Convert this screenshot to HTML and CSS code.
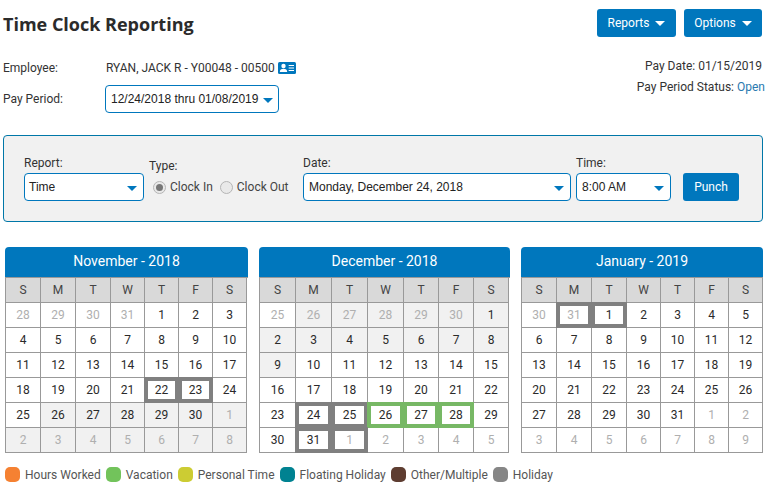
FILE: index.html
```html
<!DOCTYPE html>
<html lang="en">
<head>
<meta charset="utf-8">
<title>Time Clock Reporting</title>
<link rel="stylesheet" href="styles.css">
</head>
<body>
<div class="page">
  <header class="top">
    <h1 class="title">Time Clock Reporting</h1>
    <div class="actions">
      <button class="btn btn-reports">Reports<span class="caret"></span></button>
      <button class="btn btn-options">Options<span class="caret"></span></button>
    </div>
  </header>
  <section class="info">
    <div class="info-left">
      <div class="info-row emp-row">
        <span class="info-label">Employee:</span>
        <span class="emp-name">RYAN, JACK R - Y00048 - 00500</span>
        <svg class="id-icon" width="18" height="12" viewBox="0 0 18 12"><rect width="18" height="12" rx="1.500" fill="#0077bd"/><circle cx="5.500" cy="4" r="2.200" fill="#fff"/><path d="M1.800 10c0-2.300 1.500-3.300 3.700-3.300s3.700 1 3.700 3.300z" fill="#fff"/><path d="M10.700 3.500h5.300M10.700 6h5.300M10.700 8.500h5.300" stroke="#fff" stroke-width="1"/></svg>
      </div>
      <div class="info-row period-row">
        <span class="info-label">Pay Period:</span>
        <div class="select select-period">12/24/2018 thru 01/08/2019<span class="caret caret-blue"></span></div>
      </div>
    </div>
    <div class="info-right">
      <div class="paydate">Pay Date: 01/15/2019</div>
      <div class="status">Pay Period Status: <span class="open">Open</span></div>
    </div>
  </section>
  <section class="panel">
    <div class="field f-report">
      <label>Report:</label>
      <div class="select">Time<span class="caret caret-blue"></span></div>
    </div>
    <div class="field f-type">
      <label>Type:</label>
      <div class="radios">
        <span class="radio on"></span><span class="radio-text">Clock In</span>
        <span class="radio"></span><span class="radio-text">Clock Out</span>
      </div>
    </div>
    <div class="field f-date">
      <label>Date:</label>
      <div class="select">Monday, December 24, 2018<span class="caret caret-blue"></span></div>
    </div>
    <div class="field f-time">
      <label>Time:</label>
      <div class="select">8:00 AM<span class="caret caret-blue"></span></div>
    </div>
    <button class="btn btn-punch">Punch</button>
  </section>
  <section class="calendars" id="calendars"></section>
  <footer class="legend">
    <span class="key"><i class="sw sw-orange"></i>Hours Worked</span>
    <span class="key"><i class="sw sw-green"></i>Vacation</span>
    <span class="key"><i class="sw sw-yellow"></i>Personal Time</span>
    <span class="key"><i class="sw sw-teal"></i>Floating Holiday</span>
    <span class="key"><i class="sw sw-brown"></i>Other/Multiple</span>
    <span class="key"><i class="sw sw-gray"></i>Holiday</span>
  </footer>
</div>
<script src="app.js"></script>
</body>
</html>
```
FILE: styles.css
```css
* { box-sizing: border-box; }
html, body { margin: 0; padding: 0; background: #fff; }
body { font-family: Roboto, sans-serif; font-size: 12px; color: #333; width: 774px; height: 487px; overflow: hidden; }
.page { padding: 0 11px 0 3px; }
.top { display: flex; justify-content: space-between; align-items: flex-start; padding-top: 9px; }
.title { margin: 5px 0 0; font-family: "Open Sans", sans-serif; font-weight: 700; font-size: 18px; line-height: 20px; color: #2b2b2b; }
.actions { display: flex; gap: 8px; margin-right: 1px; }
.btn { border: 0; background: #0077bd; color: #fff; font-family: Roboto, sans-serif; font-size: 12px; font-weight: 400; border-radius: 3px; height: 28px; padding: 0; display: flex; align-items: center; justify-content: center; }
.btn-reports { width: 79px; }
.btn-options { width: 78px; }
.caret { display: inline-block; width: 0; height: 0; border-left: 5px solid transparent; border-right: 5px solid transparent; border-top: 5px solid #fff; margin-left: 6px; }
.caret-blue { border-top-color: #0077bd; position: absolute; right: 6px; top: 12px; margin: 0; }
.select-period .caret-blue { right: 5px; }
.info { display: flex; justify-content: space-between; height: 98px; }
.info-row { display: flex; align-items: center; }
.info-label { width: 102px; }
.emp-row { margin-top: 23px; height: 16px; }
.emp-name { margin-left: 1px; }
.id-icon { margin-left: 3px; }
.period-row { margin-top: 9px; }
.select { position: relative; height: 28px; background: #fff; border: 1px solid #0077bd; border-radius: 4px; padding: 0 5px; display: flex; align-items: center; color: #222; font-family: "Liberation Sans", Arial, sans-serif; font-size: 12px; }
.select-period { width: 174px; }
.info-right { text-align: right; padding-top: 21px; margin-right: -2px; line-height: 16px; }
.paydate { padding-right: 3px; }
.status { margin-top: 5px; }
.open { color: #2a7ab0; }
.panel { display: flex; align-items: flex-end; height: 87px; background: #f1f1f1; border: 1px solid #0077a8; border-radius: 4px; padding: 0 0 20px 20px; }
.field label { display: block; line-height: 14px; margin-bottom: 3px; color: #333; }
.f-report { width: 125px; }
.f-report .select { width: 120px; padding: 0 4px; }
.f-type { width: 154px; }
.f-type label { margin-bottom: 0; }
.radios { display: flex; align-items: center; height: 28px; padding-left: 4px; color: #444; }
.radio { width: 13px; height: 13px; border-radius: 50%; border: 1px solid #b5b5b5; background: #e9e9e9; margin-right: 4px; position: relative; flex: none; }
.radio.on::after { content: ""; position: absolute; left: 2px; top: 2px; width: 7px; height: 7px; border-radius: 50%; background: #777; }
.radio-text { margin-right: 7px; }
.f-date { width: 273px; }
.f-date .select { width: 268px; }
.f-time { width: 107px; }
.f-time .select { width: 95px; }
.btn-punch { width: 56px; }
.calendars { display: flex; margin: 25px 0 0 2px; gap: 11px; }
.cal-1 { width: 243px; }
.cal-2 { width: 251px; }
.cal-3 { width: 242px; }
.cal-head { background: #0077bd; color: #fff; text-align: center; height: 30px; line-height: 28px; font-size: 14px; font-weight: 400; border-radius: 4px 4px 0 0; }
.grid { display: grid; border-left: 1px solid #999; border-top: 1px solid #999; }
.cal-1 .grid, .cal-3 .grid { grid-template-columns: repeat(3, 35px) repeat(4, 34px); }
.cal-2 .grid { grid-template-columns: repeat(4, 36px) repeat(3, 35px); }
.c { height: 25px; border-right: 1px solid #999; border-bottom: 1px solid #999; display: flex; align-items: center; justify-content: center; background: #fff; color: #2a2a2a; font-size: 12px; position: relative; }
.c.dow { background: #d9d9d9; color: #444; }
.c.shade { background: #f1f1f1; }
.c.dim { color: #afafaf; }
.c.box-gray::after, .c.box-green::after { content: ""; position: absolute; top: -1px; right: -1px; bottom: -1px; left: -1px; border: 4px solid #808080; }
.c.box-green::after { border-color: #77b865; }
.legend { display: flex; align-items: center; margin: 14px 0 0 2px; color: #555; gap: 5px; }
.key { display: flex; align-items: center; }
.sw { width: 15px; height: 15px; border-radius: 5px; margin-right: 5px; display: block; }
.sw-orange { background: #f58132; }
.sw-green { background: #72c35b; }
.sw-yellow { background: #cccc33; }
.sw-teal { background: #008291; }
.sw-brown { background: #5e3d31; }
.sw-gray { background: #868686; }
```
FILE: app.js
```js
var DAYS = ["S", "M", "T", "W", "T", "F", "S"];
var months = [
  { title: "November - 2018", cls: "cal-1", prevStart: 28, first: 4, len: 30, shade: [29, 41], gray: [25, 26], green: [] },
  { title: "December - 2018", cls: "cal-2", prevStart: 25, first: 6, len: 31, shade: [1, 14], gray: [29, 30, 36, 37], green: [31, 32, 33] },
  { title: "January - 2019", cls: "cal-3", prevStart: 30, first: 2, len: 31, shade: null, gray: [1, 2], green: [] }
];
var host = document.getElementById("calendars");
months.forEach(function (m) {
  var h = '<div class="' + m.cls + '"><div class="cal-head">' + m.title + '</div><div class="grid">';
  DAYS.forEach(function (d) { h += '<div class="c dow">' + d + '</div>'; });
  for (var i = 0; i < 42; i++) {
    var n, cl = ["c"];
    if (i < m.first) { n = m.prevStart + i; cl.push("dim"); }
    else if (i - m.first < m.len) { n = i - m.first + 1; }
    else { n = i - m.first - m.len + 1; cl.push("dim"); }
    if (m.shade && i >= m.shade[0] && i <= m.shade[1]) cl.push("shade");
    if (m.gray.indexOf(i) >= 0) cl.push("box-gray");
    if (m.green.indexOf(i) >= 0) cl.push("box-green");
    h += '<div class="' + cl.join(" ") + '">' + n + '</div>';
  }
  h += '</div></div>';
  host.insertAdjacentHTML("beforeend", h);
});
```
